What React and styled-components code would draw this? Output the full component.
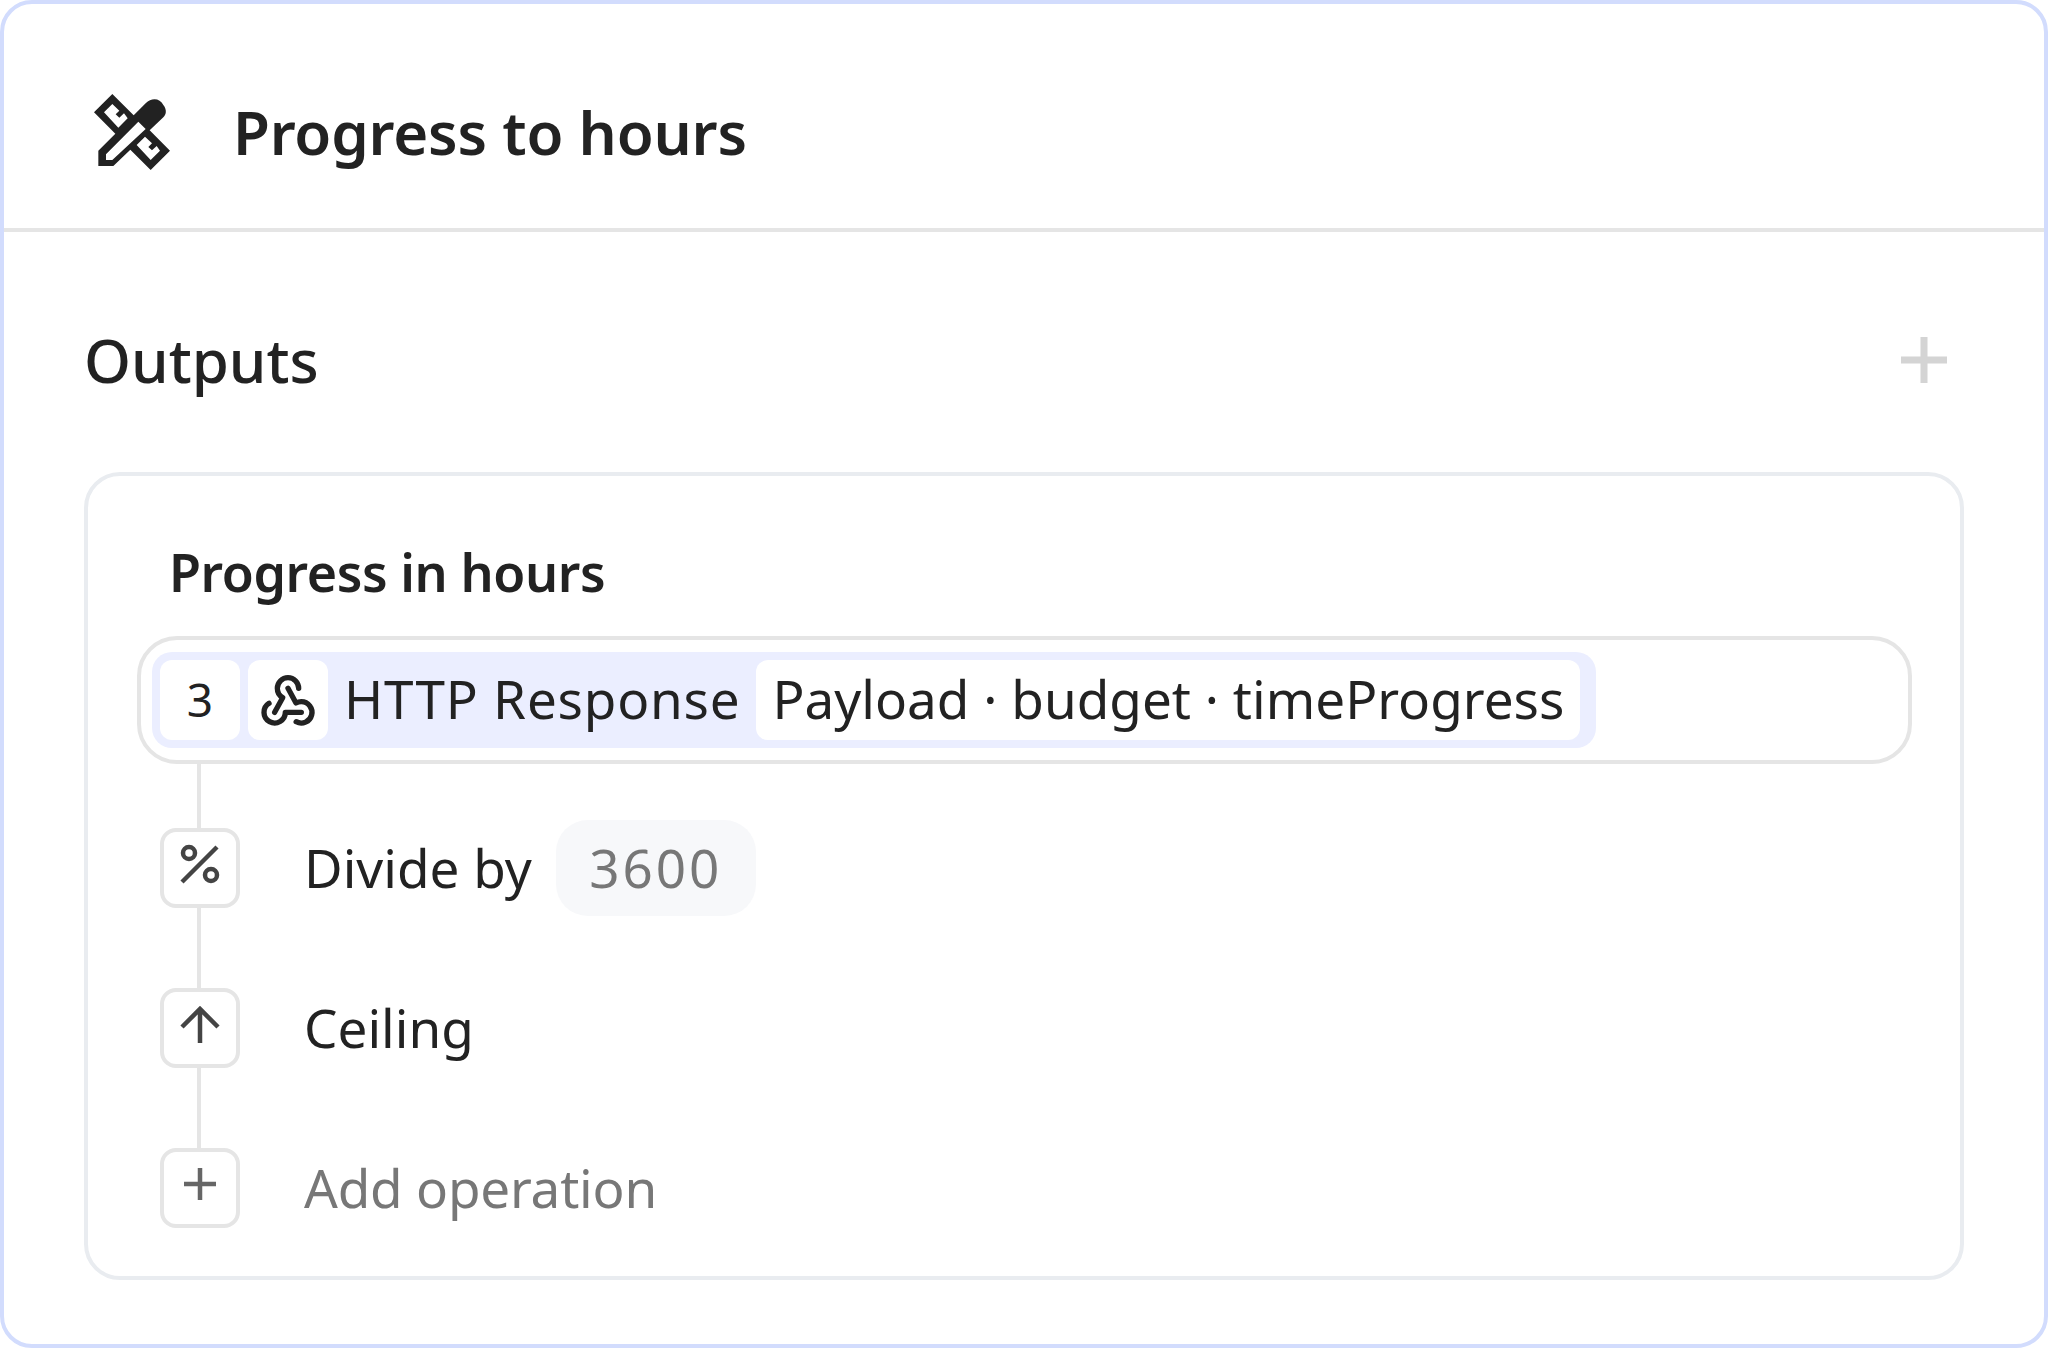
import React from 'react';
import styled, { createGlobalStyle } from 'styled-components';
import { TbWebhook } from 'react-icons/tb';

const GlobalStyle = createGlobalStyle`
    html, body {
        margin: 0;
        padding: 0;
        background: #fff;
    }
    * {
        box-sizing: border-box;
    }
`;

const Panel = styled.div`
    width: 2048px;
    height: 1348px;
    border: 4px solid #d2dcfd;
    border-radius: 32px;
    background: #fff;
    font-family: "Noto Sans", "Liberation Sans", sans-serif;
    color: #222;
    overflow: hidden;
`;

const Header = styled.header`
    display: flex;
    align-items: center;
    gap: 43px;
    padding: 76px 80px 38px 76px;
    border-bottom: 4px solid #e5e5e5;
`;

const Title = styled.h1`
    margin: 0 0 6px;
    font-size: 60px;
    line-height: 96px;
    font-weight: 600;
    letter-spacing: -0.2px;
`;

const DesignIcon = styled.svg`
    width: 110px;
    height: 110px;
    flex: none;
    display: block;
    fill: #222;
`;

const Body = styled.section`
    padding: 0 60px 0 80px;
`;

const SectionHead = styled.div`
    display: flex;
    align-items: center;
    justify-content: space-between;
    height: 240px;
    padding: 16px 36px 0 0;
`;

const SectionTitle = styled.h2`
    margin: 0;
    font-size: 60px;
    line-height: 72px;
    font-weight: 500;
`;

const AddOutput = styled.svg`
    width: 48px;
    height: 48px;
    display: block;
`;

const Card = styled.div`
    width: 1880px;
    height: 808px;
    border: 4px solid #e9ecf0;
    border-radius: 36px;
    padding: 61px 47px 0 49px;
`;

const CardTitle = styled.h3`
    margin: 0 0 0 32px;
    height: 99px;
    font-size: 52px;
    line-height: 70px;
    font-weight: 600;
    letter-spacing: -0.4px;
`;

const Field = styled.div`
    display: flex;
    align-items: center;
    width: 1775px;
    height: 128px;
    padding: 0 11px;
    border: 4px solid #e5e5e5;
    border-radius: 40px;
`;

const Token = styled.div`
    display: flex;
    align-items: center;
    height: 96px;
    padding: 8px 16px 8px 8px;
    gap: 8px;
    background: #ebeeff;
    border-radius: 20px;
    font-size: 53px;
    line-height: 72px;
    white-space: nowrap;
`;

const TokenBox = styled.span`
    display: flex;
    align-items: center;
    justify-content: center;
    width: 80px;
    height: 80px;
    background: #fff;
    border-radius: 12px;
    font-size: 46px;
    padding-bottom: 2px;
`;

const SourceName = styled.span`
    margin: 0 8px 0 8px;
    padding-bottom: 2px;
    letter-spacing: 0.8px;
`;

const PathBox = styled.span`
    display: flex;
    align-items: center;
    height: 80px;
    padding: 0 16px 2px;
    background: #fff;
    border-radius: 12px;
    letter-spacing: 0.02px;
`;

const Steps = styled.div`
    display: flex;
    flex-direction: column;
    padding-left: 23px;
`;

const Connector = styled.div`
    width: 4px;
    height: ${p => p.$height}px;
    margin-left: 37px;
    background: #e5e5e5;
`;

const Step = styled.div`
    display: flex;
    align-items: center;
    height: 80px;
`;

const StepIcon = styled.span`
    display: flex;
    align-items: center;
    justify-content: center;
    flex: none;
    width: 80px;
    height: 80px;
    margin-right: 64px;
    border: 4px solid #e5e5e5;
    border-radius: 16px;
`;

const StepLabel = styled.span`
    font-size: 53px;
    padding-bottom: 2px;
    letter-spacing: ${p => (p.$muted ? '-0.2px' : '0')};
    color: ${p => (p.$muted ? '#777' : '#222')};
`;

const ValueChip = styled.span`
    display: flex;
    align-items: center;
    justify-content: center;
    height: 96px;
    width: 200px;
    margin-left: 24px;
    padding-bottom: 2px;
    background: #f7f8fa;
    border-radius: 32px;
    font-size: 53px;
    letter-spacing: 3px;
    color: #777;
`;

const Glyph = styled.svg`
    width: 72px;
    height: 72px;
    display: block;
    fill: none;
    stroke: ${p => p.$stroke || '#444'};
    stroke-width: 4.5;
`;

const designPath = 'M97 42L161 106L197 70C215 52 240 55 250 75C262 90 258 105 250 112L209 151L270 212L212 270L151 209L100 258H55V212L106 161L42 97Z'
    + 'M78 223L175 125L197 147L97 240H78Z'
    + 'M97 72L118 92L107 103L118 113L132 100L143 115L115 143L72 97Z'
    + 'M195 170L216 190L205 201L216 211L230 198L240 212L212 240L170 195Z';

export default function App() {
    return (
        <>
            <GlobalStyle />
            <Panel>
                <Header>
                    <DesignIcon viewBox="0 0 330 330">
                        <path fillRule="evenodd" d={designPath} />
                    </DesignIcon>
                    <Title>Progress to hours</Title>
                </Header>
                <Body>
                    <SectionHead>
                        <SectionTitle>Outputs</SectionTitle>
                        <AddOutput viewBox="0 0 48 48">
                            <path d="M24 1v46M1 24h46" stroke="#d4d4d4" strokeWidth="7" fill="none" />
                        </AddOutput>
                    </SectionHead>
                    <Card>
                        <CardTitle>Progress in hours</CardTitle>
                        <Field>
                            <Token>
                                <TokenBox>3</TokenBox>
                                <TokenBox><TbWebhook size={64} color="#222" /></TokenBox>
                                <SourceName>HTTP Response</SourceName>
                                <PathBox>Payload · budget · timeProgress</PathBox>
                            </Token>
                        </Field>
                        <Steps>
                            <Connector $height={64} />
                            <Step>
                                <StepIcon>
                                    <Glyph viewBox="0 0 72 72">
                                        <circle cx="25" cy="21" r="6" />
                                        <circle cx="47" cy="43" r="6" />
                                        <path d="M53 15L18 50" />
                                    </Glyph>
                                </StepIcon>
                                <StepLabel>Divide by</StepLabel>
                                <ValueChip>3600</ValueChip>
                            </Step>
                            <Connector $height={80} />
                            <Step>
                                <StepIcon>
                                    <Glyph viewBox="0 0 72 72">
                                        <path d="M36 51V17M18 35L36 17L54 35" />
                                    </Glyph>
                                </StepIcon>
                                <StepLabel>Ceiling</StepLabel>
                            </Step>
                            <Connector $height={80} />
                            <Step>
                                <StepIcon>
                                    <Glyph viewBox="0 0 72 72" $stroke="#666">
                                        <path d="M20 32H52M36 16V48" />
                                    </Glyph>
                                </StepIcon>
                                <StepLabel $muted>Add operation</StepLabel>
                            </Step>
                        </Steps>
                    </Card>
                </Body>
            </Panel>
        </>
    );
}
